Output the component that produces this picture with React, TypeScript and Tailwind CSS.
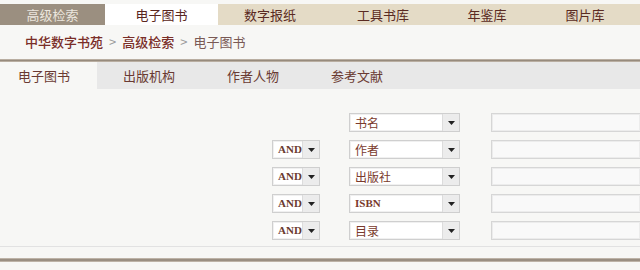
import React from "react";

const cjk = { fontFamily: '"Noto Sans CJK SC", "Noto Sans", sans-serif' };
const serif = { fontFamily: '"Liberation Serif", "Noto Sans CJK SC", serif' };

function Arrow() {
  return (
    <div className="flex h-full w-[17px] items-center justify-center border-l border-[#dcdcdc] bg-[#ececec]">
      <svg width="7" height="4" viewBox="0 0 7 4">
        <polygon points="0,0 7,0 3.5,4" fill="#222" />
      </svg>
    </div>
  );
}

function Row({ field, first }: { field: string; first?: boolean }) {
  const isLatin = field === "ISBN";
  return (
    <div className="flex h-[19px] items-center">
      <div className="ml-[272px] w-[48px]">
        {!first && (
          <div className="flex h-[19px] w-[48px] items-center border border-[#cfcfcf] bg-white shadow-[inset_0_0_0_1px_#f0f0f0]">
            <div className="flex-1 pl-[5px] text-[11px] font-bold leading-none text-[#6a3a30]" style={serif}>
              AND
            </div>
            <Arrow />
          </div>
        )}
      </div>
      <div className="ml-[29px]">
        <div className="flex h-[19px] w-[111px] items-center border border-[#cfcfcf] bg-white shadow-[inset_0_0_0_1px_#f0f0f0]">
          <div
            className={`flex-1 pl-[5px] leading-none text-[#7a3a2c] ${isLatin ? "text-[11px] font-bold" : "text-[12px]"}`}
            style={isLatin ? serif : cjk}
          >
            {field}
          </div>
          <Arrow />
        </div>
      </div>
      <div className="ml-[31px] h-[19px] flex-1 border border-r-0 border-[#d6d6d6] bg-[#f9f9f9] shadow-[inset_0_0_0_1px_#ececec]" />
    </div>
  );
}

export default function App() {
  const top = [
    { t: "高级检索", w: "w-[105px]", cls: "bg-[#9b8f80] text-[#ece6de]" },
    { t: "电子图书", w: "w-[113px]", cls: "bg-white text-[#5a2620]" },
    { t: "数字报纸", w: "w-[104px]", cls: "bg-[#e4dbc6] text-[#5a2a22]" },
    { t: "工具书库", w: "w-[122px]", cls: "bg-[#e4dbc6] text-[#5a2a22]" },
    { t: "年鉴库", w: "w-[86px]", cls: "bg-[#e4dbc6] text-[#5a2a22]" },
    { t: "图片库", w: "flex-1", cls: "bg-[#e4dbc6] text-[#5a2a22]" },
  ];
  const tabs = ["电子图书", "出版机构", "作者人物", "参考文献"];
  return (
    <div className="h-[270px] w-[640px] overflow-hidden bg-[#f7f7f5]" style={cjk}>
      <div className="flex h-[25px] pt-[4px]">
        {top.map((it) => (
          <div
            key={it.t}
            className={`flex h-[21px] items-center justify-center text-[13px] ${it.w} ${it.cls}`}
          >
            {it.t}
          </div>
        ))}
      </div>
      <div className="flex h-[34px] items-center pl-[25px] pb-[1px] text-[13px]">
        <span className="font-medium text-[#7a2e28]">中华数字书苑</span>
        <span className="mx-[6px] text-[#9a9a9a]">&gt;</span>
        <span className="font-medium text-[#7a2e28]">高级检索</span>
        <span className="mx-[6px] text-[#9a9a9a]">&gt;</span>
        <span className="text-[#7a5a55]">电子图书</span>
      </div>
      <div className="h-[3px] border-y border-[#b9aea1] bg-[#978b7d]" />
      <div className="flex h-[27px] bg-[#e8e8e8] text-[13px] text-[#6a3a32]">
        <div className="flex w-[97px] items-center bg-[#f7f7f5] pl-[18px]">电子图书</div>
        {tabs.slice(1).map((t) => (
          <div key={t} className="flex w-[104px] items-center justify-center">
            {t}
          </div>
        ))}
      </div>
      <div className="flex flex-col gap-[8px] pt-[24px]">
        <Row field="书名" first />
        <Row field="作者" />
        <Row field="出版社" />
        <Row field="ISBN" />
        <Row field="目录" />
      </div>
      <div className="mt-[6px] h-[1px] bg-[#e2e2e2]" />
      <div className="mt-[11px] h-[4px] border-y border-[#bdb3a7] bg-[#9a8f82]" />
    </div>
  );
}
